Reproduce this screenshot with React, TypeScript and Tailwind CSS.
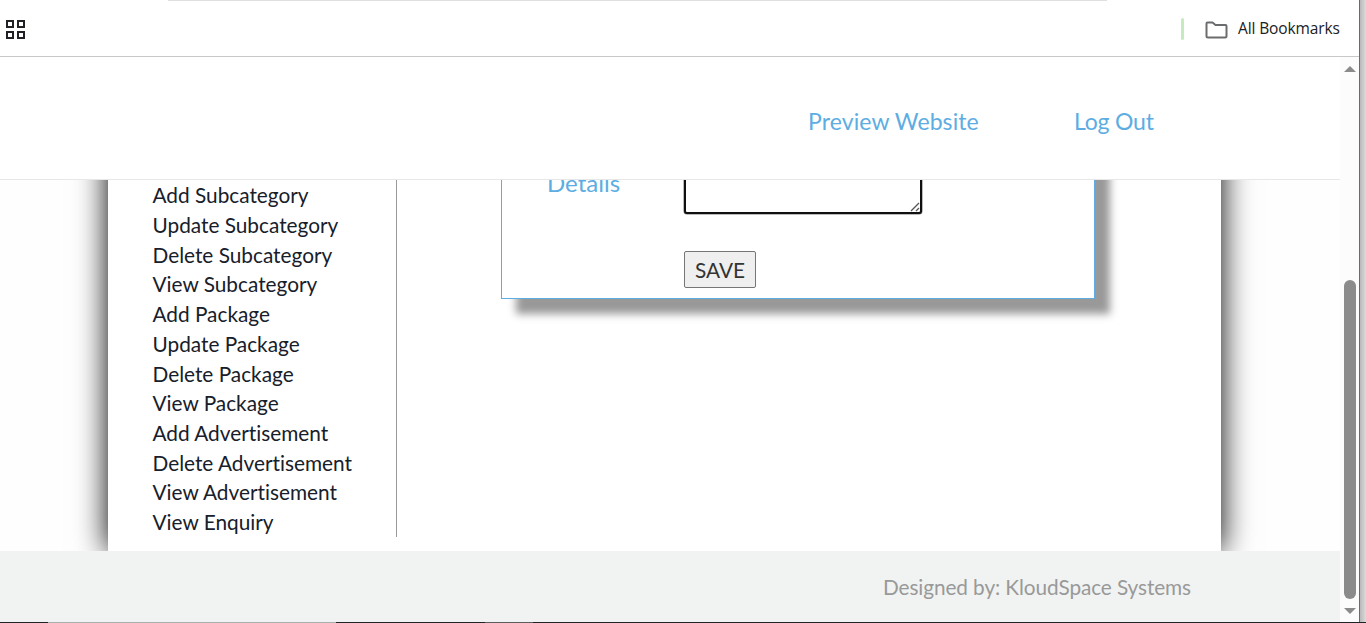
const menuItems = [
  "Add Subcategory",
  "Update Subcategory",
  "Delete Subcategory",
  "View Subcategory",
  "Add Package",
  "Update Package",
  "Delete Package",
  "View Package",
  "Add Advertisement",
  "Delete Advertisement",
  "View Advertisement",
  "View Enquiry",
];

function BookmarksBar() {
  return (
    <div className="h-[57px] shrink-0 border-b border-[#c8c8c8] bg-white">
      <div className="ml-[168px] h-px w-[939px] bg-[#e0e0e0]" />
      <div className="flex h-[55px] items-center justify-between pl-[6px] pr-[20px]">
        <svg className="mt-[2px]" width="20" height="20" viewBox="0 0 20 20" fill="none" stroke="#202124" strokeWidth="2" shapeRendering="crispEdges">
          <rect x="1" y="1" width="6" height="6" />
          <rect x="12" y="1" width="6" height="6" />
          <rect x="1" y="12" width="6" height="6" />
          <rect x="12" y="12" width="6" height="6" />
        </svg>
        <div className="flex items-center">
          <span className="mr-[21px] h-[22px] w-[3px] rounded-full bg-[#c6e9bd]" />
          <svg className="mr-[10px] mt-[2px]" width="23" height="18" viewBox="0 0 23 18" fill="none" stroke="#6b6c6e" strokeWidth="2" strokeLinejoin="round">
            <path d="M2.5 1.5H7.5L10.5 4H20.5Q21.5 4 21.5 5V15Q21.5 16.5 20 16.5H3Q1.5 16.5 1.5 15V2.5Q1.5 1.5 2.5 1.5Z" />
          </svg>
          <p className="w-[101px] whitespace-nowrap font-['Open_Sans','Noto_Sans',sans-serif] text-[15.5px] tracking-[-0.12px] text-[#202124]">
            All Bookmarks
          </p>
        </div>
      </div>
    </div>
  );
}

function SiteHeader() {
  return (
    <header className="z-10 flex h-[123px] shrink-0 items-center border-b border-[#e7e7e7] bg-white pl-[808px] pt-[6px] text-[23px] text-[#5dade2]">
      <a className="w-[266px] tracking-[0.1px]">Preview Website</a>
      <a className="tracking-[-0.2px]">Log Out</a>
    </header>
  );
}

function DetailsForm() {
  return (
    <div className="ml-[104px] h-[149px] w-[594px] -mt-[30px] border border-[#5dade2] bg-white shadow-[15px_15px_8px_#999]">
      <div className="flex pl-[45px]">
        <label className="mt-[17px] w-[137px] text-[24px] leading-[30px] text-[#5dade2]">Details</label>
        <div className="relative h-[63px] w-[238px] rounded-[3px] border-2 border-[#101010] bg-white shadow-[0_0_0_0.5px_#777]">
          <svg className="absolute bottom-0 right-0" width="10" height="10" viewBox="0 0 10 10" stroke="#555" strokeWidth="1.3">
            <path d="M1 9L9 1M6 9L9 6" />
          </svg>
        </div>
      </div>
      <button className="ml-[182px] mt-[37px] h-[37px] w-[72px] rounded-[2px] border border-[#767676] bg-[#efefef] text-[20.8px] text-[#333]">
        SAVE
      </button>
    </div>
  );
}

function Scrollbar() {
  return (
    <div className="flex w-[19px] shrink-0 flex-col items-center bg-[#fcfcfc] pl-px">
      <svg className="mt-[9px]" width="12" height="6" viewBox="0 0 12 6" fill="#8b8b8b">
        <path d="M6 0L12 6H0Z" />
      </svg>
      <div className="mt-[208px] h-[319px] w-[12px] rounded-full bg-[#8b8b8b]" />
      <svg className="mt-[9px]" width="12" height="6" viewBox="0 0 12 6" fill="#8b8b8b">
        <path d="M0 0H12L6 6Z" />
      </svg>
    </div>
  );
}

export default function App() {
  return (
    <div className="flex h-[623px] w-[1366px] flex-col overflow-hidden bg-white font-[Lato,sans-serif] [font-variant-ligatures:none]">
      <div className="flex h-[622px]">
        <div className="flex w-[1359px] flex-col">
          <BookmarksBar />
          <div className="flex h-[565px]">
            <div className="flex w-[1340px] flex-col">
              <SiteHeader />
              <main className="h-[371px] overflow-hidden bg-[#fefefe]">
                <div className="-mt-[60px] ml-[108px] flex h-[431px] w-[1113px] bg-white pt-[60px] shadow-[0_0_30px_#000]">
                  <ul className="h-[357px] w-[289px] border-r border-[#999] pl-[44.5px] pt-[0.3px] text-[20.8px] leading-[29.71px] text-[#17202a]">
                    {menuItems.map((item) => (
                      <li key={item}>{item}</li>
                    ))}
                  </ul>
                  <DetailsForm />
                </div>
              </main>
              <footer className="h-[71px] bg-[#f0f3f2] pl-[883px] pt-[20px] text-[20.8px] leading-[32px] tracking-[-0.1px] text-[#999]">
                Designed by: KloudSpace Systems
              </footer>
            </div>
            <Scrollbar />
          </div>
        </div>
        <div className="w-[7px] border-l border-[#6b6b6b] bg-linear-to-r from-[#b8b8b8] to-[#dcdcdc]" />
      </div>
      <div className="flex h-px bg-[#202427]">
        <div className="ml-[48px] w-[288px] bg-[#aab0af]" />
        <div className="ml-[149px] w-[48px] bg-[#5a5c5e]" />
      </div>
    </div>
  );
}
